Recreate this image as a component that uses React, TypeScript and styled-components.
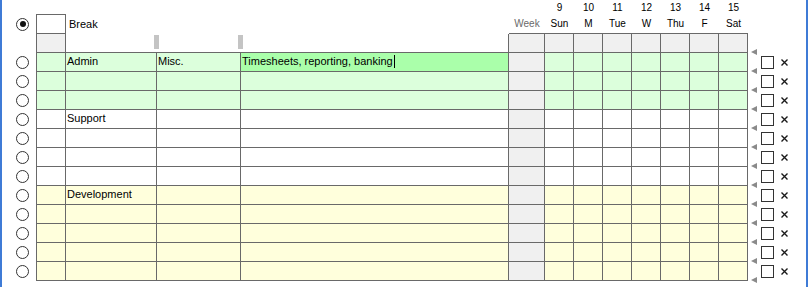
import styled, { createGlobalStyle } from 'styled-components';

const LINE = '#696969';
const GREY = '#f0f0f0';
const COLUMNS = '34px 30px 91px 84px 268px 36px repeat(7, 29px) 58px';

const rowColors = {
  green: '#dcffdc',
  white: '#ffffff',
  yellow: '#ffffdc',
};

type Tone = keyof typeof rowColors;

type Entry = {
  tone: Tone;
  label?: string;
  category?: string;
  description?: string;
  editing?: boolean;
};

const days = [
  { num: 9, name: 'Sun' },
  { num: 10, name: 'M' },
  { num: 11, name: 'Tue' },
  { num: 12, name: 'W' },
  { num: 13, name: 'Thu' },
  { num: 14, name: 'F' },
  { num: 15, name: 'Sat' },
];

const entries: Entry[] = [
  { tone: 'green', label: 'Admin', category: 'Misc.', description: 'Timesheets, reporting, banking', editing: true },
  { tone: 'green' },
  { tone: 'green' },
  { tone: 'white', label: 'Support' },
  { tone: 'white' },
  { tone: 'white' },
  { tone: 'white' },
  { tone: 'yellow', label: 'Development' },
  { tone: 'yellow' },
  { tone: 'yellow' },
  { tone: 'yellow' },
  { tone: 'yellow' },
];

const GlobalStyle = createGlobalStyle`
  html, body {
    margin: 0;
    padding: 0;
    background: #fff;
  }
  body {
    font-family: "Liberation Sans", Arial, sans-serif;
    color: #000;
  }
`;

const Frame = styled.div`
  width: 804px;
  height: 287px;
  border-left: 2px solid #3f7bd6;
  border-right: 2px solid #3f7bd6;
  display: flex;
  flex-direction: column;
  overflow: hidden;
`;

const Row = styled.div<{ $height: number }>`
  display: grid;
  grid-template-columns: ${COLUMNS};
  height: ${({ $height }) => $height}px;
`;

const Cell = styled.div<{
  $bg?: string;
  $left?: boolean;
  $right?: boolean;
  $top?: boolean;
  $bottom?: boolean;
}>`
  box-sizing: border-box;
  position: relative;
  min-width: 0;
  background: ${({ $bg }) => $bg ?? 'transparent'};
  border-left: ${({ $left }) => ($left ? `1px solid ${LINE}` : 'none')};
  border-right: ${({ $right }) => ($right ? `1px solid ${LINE}` : 'none')};
  border-top: ${({ $top }) => ($top ? `1px solid ${LINE}` : 'none')};
  border-bottom: ${({ $bottom }) => ($bottom ? `1px solid ${LINE}` : 'none')};
`;

const HeadText = styled.div<{ $muted?: boolean }>`
  height: 100%;
  display: flex;
  align-items: center;
  justify-content: center;
  font-size: 10px;
  color: ${({ $muted }) => ($muted ? '#6a6a6a' : '#000')};
`;

const LabelText = styled.div`
  height: 100%;
  display: flex;
  align-items: center;
  padding-left: 3px;
  font-size: 11px;
`;

const CellText = styled.div`
  padding: 2px 1px 0;
  font-size: 11px;
  line-height: 13px;
  white-space: nowrap;
  overflow: hidden;
  display: flex;
  align-items: center;
`;

const Caret = styled.span`
  display: inline-block;
  width: 1px;
  height: 13px;
  margin-left: 1px;
  background: #000;
`;

const RadioSlot = styled.div`
  display: flex;
  align-items: center;
  padding-left: 14px;
`;

const Radio = styled.span<{ $checked?: boolean }>`
  box-sizing: border-box;
  width: 13px;
  height: 13px;
  border: 1px solid #333;
  border-radius: 50%;
  background: #fff;
  display: flex;
  align-items: center;
  justify-content: center;

  &::after {
    content: '';
    display: ${({ $checked }) => ($checked ? 'block' : 'none')};
    width: 6px;
    height: 6px;
    border-radius: 50%;
    background: #111;
  }
`;

const Grip = styled.span`
  position: absolute;
  right: -2px;
  top: 1px;
  width: 5px;
  height: 14px;
  background: #c4c4c4;
`;

const Actions = styled.div<{ $last?: boolean }>`
  position: relative;
  display: flex;
  align-items: center;

  &::before,
  &::after {
    content: '';
    position: absolute;
    left: 3px;
    border-top: 3px solid transparent;
    border-bottom: 3px solid transparent;
    border-right: 6px solid #8a8a8a;
  }
  &::before {
    top: -4px;
  }
  &::after {
    top: 15px;
    display: ${({ $last }) => ($last ? 'block' : 'none')};
  }
`;

const Check = styled.span`
  box-sizing: border-box;
  width: 13px;
  height: 13px;
  margin-left: 13px;
  border: 1px solid #333;
  background: #fff;
`;

const Remove = styled.svg`
  width: 7px;
  height: 7px;
  margin-left: 7px;
`;

const RemoveIcon = () => (
  <Remove viewBox="0 0 7 7">
    <path d="M0.5 0.5 L6.5 6.5 M6.5 0.5 L0.5 6.5" stroke="#1a1a1a" strokeWidth="1.4" />
  </Remove>
);

const DataRow = ({ entry, last }: { entry: Entry; last: boolean }) => {
  const bg = rowColors[entry.tone];
  return (
    <Row $height={19}>
      <RadioSlot>
        <Radio />
      </RadioSlot>
      <Cell $bg={bg} $left $right $bottom />
      <Cell $bg={bg} $right $bottom>
        {entry.label && <CellText>{entry.label}</CellText>}
      </Cell>
      <Cell $bg={bg} $right $bottom>
        {entry.category && <CellText>{entry.category}</CellText>}
      </Cell>
      <Cell $bg={entry.editing ? '#aaffaa' : bg} $right $bottom>
        {entry.description && (
          <CellText>
            {entry.description}
            {entry.editing && <Caret />}
          </CellText>
        )}
      </Cell>
      <Cell $bg={GREY} $right $bottom />
      {days.map(d => (
        <Cell key={d.num} $bg={bg} $right $bottom />
      ))}
      <Actions $last={last}>
        <Check />
        <RemoveIcon />
      </Actions>
    </Row>
  );
};

const App = () => {
  return (
    <>
      <GlobalStyle />
      <Frame>
        <Row $height={14}>
          <div />
          <div />
          <div />
          <div />
          <div />
          <div />
          {days.map(d => (
            <HeadText key={d.num}>{d.num}</HeadText>
          ))}
          <div />
        </Row>

        <Row $height={20}>
          <RadioSlot>
            <Radio $checked />
          </RadioSlot>
          <Cell $bg="#fff" $left $right $top $bottom />
          <Cell>
            <LabelText>Break</LabelText>
          </Cell>
          <Cell />
          <Cell />
          <Cell $bottom>
            <HeadText $muted>Week</HeadText>
          </Cell>
          {days.map(d => (
            <Cell key={d.num} $bottom>
              <HeadText>{d.name}</HeadText>
            </Cell>
          ))}
          <div />
        </Row>

        <Row $height={19}>
          <div />
          <Cell $bg={GREY} $left $right $bottom />
          <Cell $bottom>
            <Grip />
          </Cell>
          <Cell $bottom>
            <Grip />
          </Cell>
          <Cell $right $bottom />
          <Cell $bg={GREY} $right $bottom />
          {days.map(d => (
            <Cell key={d.num} $bg={GREY} $right $bottom />
          ))}
          <div />
        </Row>

        {entries.map((entry, i) => (
          <DataRow key={i} entry={entry} last={i === entries.length - 1} />
        ))}
      </Frame>
    </>
  );
};

export default App;
